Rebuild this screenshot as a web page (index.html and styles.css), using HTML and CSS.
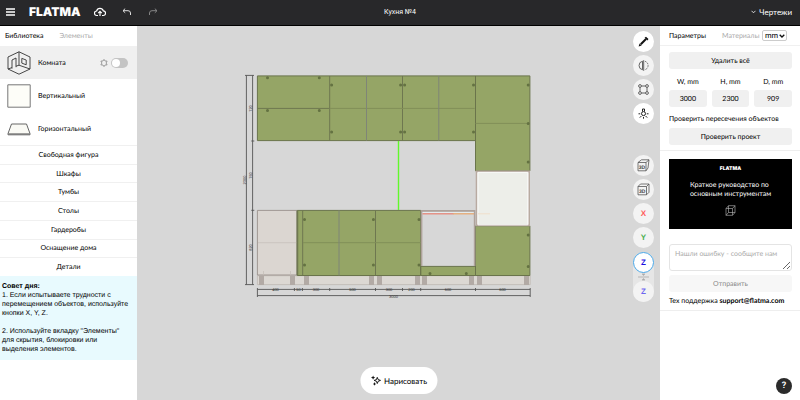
FILE: index.html
```
<!DOCTYPE html>
<html lang="ru">
<head>
<meta charset="utf-8">
<title>Flatma</title>
<link rel="stylesheet" href="styles.css">
</head>
<body>
<header class="bar">
  <button class="icon-btn menu" aria-label="Меню"><svg width="9" height="8" viewBox="0 0 9 8"><path d="M0 1h9M0 4h9M0 7h9" stroke="#fff" stroke-width="1.3"/></svg></button>
  <a class="logo" href="#">FLATMA</a>
  <button class="icon-btn cloud" aria-label="Сохранить"><svg width="12" height="10" viewBox="0 0 12 10" fill="none" stroke="#fff" stroke-width="1.2"><path d="M4 8.5H2.8A2.2 2.2 0 0 1 2.6 4 3.5 3.5 0 0 1 9.3 3.9 2.3 2.3 0 0 1 9.2 8.5H8M6 9V4.6M4.2 6.2 6 4.4l1.8 1.8"/></svg></button>
  <button class="icon-btn undo" aria-label="Отменить"><svg width="10" height="8" viewBox="0 0 10 8" fill="none" stroke="#ddd"><path d="M3.2.6 1 2.7l2.2 2.1M1 2.7h5q2.5 0 2.5 2.3V7"/></svg></button>
  <button class="icon-btn" aria-label="Повторить"><svg width="10" height="8" viewBox="0 0 10 8" fill="none" stroke="#858585"><path d="M6.8.6 9 2.7 6.8 4.8M9 2.7H4Q1.5 2.7 1.5 5v2"/></svg></button>
  <h1 class="title">Кухня №4</h1>
  <button class="icon-btn drawings"><svg width="5" height="4" viewBox="0 0 5 4" fill="none" stroke="#fff" stroke-width=".8"><path d="m.5.8 2 2 2-2"/></svg>Чертежи</button>
</header>
<main class="workspace">
  <aside class="library">
    <nav class="tabs"><a href="#">Библиотека</a><a class="muted" href="#">Элементы</a></nav>
    <div class="item selected">
      <svg width="24" height="24" viewBox="0 0 24 24" fill="none" stroke="#333" stroke-width=".9"><path d="M12 .8 23 6v12l-11 5.2L1 18V6zM12 .8v13.4M1 18l4-1.4M9 15.2l3-1L23 18M5 17.6V9l4-2v9.2M14.8 7.4l4.4 1.6v4.8l-4.4-1.7z"/></svg>
      <label class="name" for="room">Комната</label>
      <svg class="gear" width="8" height="8" viewBox="0 0 8 8" fill="none" stroke="#888" stroke-width=".8"><path d="M4 .4 5 2l2.1.1L6.1 4l1 1.9L5 6 4 7.6 3 6 .9 5.9l1-1.9-1-1.9L3 2z"/></svg>
      <input class="switch" id="room" type="checkbox">
    </div>
    <div class="item">
      <svg width="24" height="24" viewBox="0 0 24 24"><path d="M.8.8h22.4v22.4H.8z" fill="#fdfdf8" stroke="#777"/></svg>
      <span class="name">Вертикальный</span>
    </div>
    <div class="item">
      <svg width="24" height="24" viewBox="0 0 24 24"><path d="M4.5 7h15L23 16.6v1.2H1v-1.2z" fill="#fafaf5" stroke="#666"/><path d="M1 17h22" stroke="#777" stroke-width="1.4"/></svg>
      <span class="name">Горизонтальный</span>
    </div>
    <nav class="groups">
      <a href="#">Свободная фигура</a><a href="#">Шкафы</a><a href="#">Тумбы</a><a href="#">Столы</a><a href="#">Гардеробы</a><a href="#">Оснащение дома</a><a href="#">Детали</a>
    </nav>
    <section class="tip">
      <h2>Совет дня:</h2>
      <p>1. Если испытываете трудности с перемещением объектов, используйте кнопки X, Y, Z.</p>
      <p>2. Используйте вкладку "Элементы" для скрытия, блокировки или выделения элементов.</p>
    </section>
  </aside>

  <section class="stage">
    <svg class="plan" width="321" height="230" viewBox="238 70 321 230">
      <g fill="none" stroke="#555" stroke-width=".9">
        <path d="M246.4 75.4V284.6M252.6 75.4V284.6M245 75.4h9M251.3 141h3M251.3 210.3h3M245 284.6h9"/>
        <path d="M257.4 289.4H530.2M257.4 295.6H530.2M257.4 288v9M530.2 288v9M294.4 288v3M302.4 288v3M329.7 288v3M375.5 288v3M402.5 288v3M420.7 288v3M475.5 288v3"/>
      </g>
      <g class="dims">
        <text x="275.5" y="291">400</text><text x="298.4" y="291">50</text><text x="316" y="291">300</text><text x="352.5" y="291">500</text><text x="389" y="291">300</text><text x="411.5" y="291">200</text><text x="448" y="291">600</text><text x="502.5" y="291">600</text><text x="393.5" y="297.5">3000</text>
        <text transform="translate(252 108.5) rotate(-90)">720</text><text transform="translate(252 175.5) rotate(-90)">760</text><text transform="translate(252 247.5) rotate(-90)">820</text><text transform="translate(246 180) rotate(-90)">2300</text>
      </g>
      <path d="M257.4 275.7H530.2V284.6H257.4z" fill="#dcd8d3" stroke="#bbb4ae" stroke-width=".7"/>
      <path d="M259 276h5v9h-5zM290 276h5v9h-5zM304 276h5v9h-5zM369 276h5v9h-5zM377 276h5v9h-5zM415 276h5v9h-5zM422 276h5v9h-5zM469 276h5v9h-5zM477 276h5v9h-5zM524 276h5v9h-5z" fill="#b2aaa5"/>
      <path d="M257.4 210.4H297v64.6h-39.6z" fill="#dbd6d1" stroke="#99908b" stroke-width=".9"/>
      <path d="M258 242.7h39M263.5 271v4M290.5 271v4" stroke="#c4bdb7" stroke-width=".7"/>
      <g fill="#95a566" stroke="#6a744b">
        <path d="M257.4 75.9H475.5V140.6H257.4zM475.5 75.9h54.4v95h-54.4zM475.5 225.9h54.4v49.6h-54.4zM297.2 210.4h123.5v65.1H297.2zM420.7 266.4h54.8v9.1h-54.8z"/>
      </g>
      <g fill="none" stroke="#6e7750">
        <path d="M257.4 108.4h72.3M329.7 76v64.6M402.5 76v64.6M302.7 210.4v65M375.5 210.4v65"/>
        <path d="M329.7 108.4h145M475.5 123.4h54M303 242.7h117.7" stroke="#818f58"/>
        <path d="M366.5 76v64.6M438.8 76v64.6M339 210.4v65" stroke="#7f8577"/>
        <path d="M297.5 211v64" stroke-width="1.5"/>
      </g>
      <path d="M476.5 171.4h52.7v54h-52.7z" fill="#edeee9" stroke="#b8aaa1" stroke-width="1.6"/>
      <path d="M478 172.4h49.8v52.4H478z" fill="none" stroke="#fafafa"/>
      <path d="M421.6 266V210.9h53V266" fill="none" stroke="#aea29b" stroke-width="1.6"/>
      <path d="M422.6 212.7h51" stroke="#e4f1f4"/>
      <path d="M422.5 213.8h31" stroke="#e68172" stroke-width="1.2"/><path d="M453 213.8h21" stroke="#e8a56b" stroke-width="1.2"/><path d="M478 213.8h12" stroke="#f0dfca"/>
      <path d="M398.5 141v69" stroke="#62f82b" stroke-width="1.4"/>
      <path class="hinges" d="M267.5 77.8h.01M319.3 77.8h.01M267.5 110.6h.01M319.3 110.6h.01M331.6 85h.01M331.6 132h.01M400.6 85h.01M400.6 132h.01M404.6 85h.01M404.6 132h.01M473.5 85h.01M473.5 132h.01M528.2 85h.01M528.2 123.4h.01M528.2 162h.01M304.5 219.4h.01M304.5 265h.01M373.4 219.4h.01M373.4 265h.01M419 219.4h.01M419 265h.01M430 273.6h.01M466.3 273.6h.01M528.2 235h.01M528.2 266.4h.01"/>
    </svg>

    <div class="tools">
      <button class="tool solid" aria-label="Крепёж"><svg width="11" height="11" viewBox="0 0 11 11"><path d="M2.8 8.2 8 3" stroke="#111" stroke-width="2"/><path d="m6.6 1.8 1.4-1.1 2.5 2.4-1.2 1.5zM.6 10.4l1-3L3.7 9.4z" fill="#111"/></svg></button>
      <button class="tool" aria-label="Отразить"><svg width="11" height="11" viewBox="0 0 11 11" fill="none" stroke="#555" stroke-width=".9"><path d="M4.5 1.2a4.4 4.4 0 0 0 0 8.6zM5.7.2v10.6"/><path d="M7 1.3a4.4 4.4 0 0 1 0 8.4" stroke-dasharray="1.6 1"/></svg></button>
      <button class="tool" aria-label="Группа"><svg width="11" height="11" viewBox="0 0 11 11" fill="none" stroke="#555" stroke-width=".9"><circle cx="2" cy="2" r="1.4"/><circle cx="9" cy="2" r="1.4"/><circle cx="2" cy="9" r="1.4"/><circle cx="9" cy="9" r="1.4"/><path d="M3.3 2h4.4M3.3 9h4.4M2 3.3v4.4M9 3.3v4.4"/></svg></button>
      <button class="tool solid" aria-label="Свет"><svg width="11" height="11" viewBox="0 0 11 11" fill="none" stroke="#222"><circle cx="5.5" cy="5.6" r="2"/><path d="M4.5 3.5V1h2v2.5M.5 5.8h1.7M8.8 5.8h1.7M1.8 9.6l1.6-1.6M9.2 9.6 7.6 8M5.5 9v1.7"/></svg></button>
      <button class="tool second" aria-label="Перспектива 3D"><svg width="13" height="13" viewBox="0 0 13 13"><path d="M1 3.5h8v8.3H1zM1 3.5 4.5.8H12L9 3.5M12 .8 11 9l-2 2.8" fill="none" stroke="#555" stroke-width=".8"/><text class="cube" x="5" y="9.5">3D</text></svg></button>
      <button class="tool" aria-label="Изометрия 3D"><svg width="13" height="13" viewBox="0 0 13 13"><path d="M1 3.5h8.5v8.3H1zM1 3.5 3.5 1H12L9.5 3.5M12 1v8.3l-2.5 2.5" fill="none" stroke="#555" stroke-width=".8"/><text class="cube" x="5.2" y="9.5">3D</text></svg></button>
      <button class="tool axis-x">X</button>
      <button class="tool axis-y">Y</button>
      <div class="depth">
        <button class="tool axis-z">Z</button>
        <svg width="11" height="8" viewBox="0 0 11 8"><path d="M0 4h11M4 1h3M4 7h3" stroke="#aaa" stroke-width=".8"/><path d="m4 1 1.5 2L7 1M4 7l1.5-2L7 7" fill="#aaa"/></svg>
        <button class="tool axis-back">Z</button>
      </div>
    </div>
    <button class="draw"><svg width="11" height="11" viewBox="0 0 11 11"><path d="M6.8 2.4 7.7 4.6 10 5.4 7.7 6.3 6.8 8.5 6 6.3 3.7 5.4 6 4.6z" fill="none" stroke="#111"/><path d="m2.6.4.7 1.5 1.5.6-1.5.7-.7 1.5-.6-1.5-1.5-.7L2 1.9zM4 7.1l.6 1.3 1.3.5-1.3.6L4 10.8l-.5-1.3-1.3-.6 1.3-.5z" fill="#111"/></svg>Нарисовать</button>
  </section>

  <aside class="props">
    <nav class="tabs"><a href="#">Параметры</a><a class="muted" href="#">Материалы</a>
      <div class="units"><select aria-label="Единицы"><option>mm</option></select><svg width="6" height="4" viewBox="0 0 6 4" fill="none" stroke="#111" stroke-width="1.3"><path d="m.7.7 2.3 2.3L5.3.7"/></svg></div></nav>
    <div class="block form">
      <button class="wide">Удалить всё</button>
      <div class="sizes">
        <label>W, mm<input value="3000"></label>
        <label>H, mm<input value="2300"></label>
        <label>D, mm<input value="909"></label>
      </div>
      <p class="check">Проверить пересечения объектов</p>
      <button class="wide">Проверить проект</button>
    </div>
    <div class="block help">
      <a class="guide" href="#">
        <span class="guide-logo">FLATMA</span>
        <span class="guide-text">Краткое руководство по<br>основным инструментам</span>
        <svg width="11" height="11" viewBox="0 0 11 11" fill="none" stroke="#bbb" stroke-width=".6"><path d="M1 3.5h6.5v6.8H1zM3.5.7H10v6.8H3.5zM1 3.5 3.5.7M7.5 3.5 10 .7M7.5 10.3 10 7.5M1 10.3l2.5-2.8"/></svg>
      </a>
      <textarea aria-label="Сообщение об ошибке" placeholder="Нашли ошибку - сообщите нам"></textarea>
      <button class="wide send" disabled>Отправить</button>
      <p class="support">Тех поддержка <a href="mailto:support@flatma.com">support@flatma.com</a></p>
    </div>
  </aside>
</main>
<button class="question" aria-label="Помощь">?</button>
</body>
</html>
```
FILE: styles.css
```
* { box-sizing: border-box; }
body {
  margin: 0;
  min-height: 100vh;
  display: flex;
  flex-direction: column;
  font: 7px/10px Lato, sans-serif;
  color: #000;
  text-rendering: geometricPrecision;
}
h1, h2, p { margin: 0; font-size: inherit; font-weight: inherit; }
a { color: inherit; text-decoration: none; }
button, input, select, textarea { font: inherit; color: inherit; margin: 0; padding: 0; border: 0; text-rendering: inherit; }
svg { display: block; flex: none; }

.bar {
  position: relative;
  display: flex;
  align-items: center;
  height: 26px;
  padding: 0 8px 2px 6px;
  background: #28282a;
  border-bottom: 1px solid #000;
  color: #fff;
}
.icon-btn { background: none; }
.logo { margin: 0 14px; font: 900 12px/12px Inter, sans-serif; }
.cloud { margin-right: 16px; }
.undo { margin-right: 16px; }
.title { position: absolute; left: 0; right: 0; text-align: center; pointer-events: none; font-family: Roboto, sans-serif; }
.drawings { display: flex; align-items: center; gap: 3px; margin-left: auto; font-size: 8px; }

.workspace { flex: 1; display: grid; grid-template-columns: 137px 1fr 140px; }
.tabs { display: flex; align-items: center; height: 20px; }
.muted { margin-left: 16px; color: #aaa; }

.library { background: #fff; }
.library .tabs { padding-left: 5px; }
.item { display: flex; align-items: center; height: 33px; padding: 0 9px 0 7px; }
.selected { background: #f0f0f0; }
.name { margin-left: 7px; }
.gear { margin-left: auto; }
.switch {
  appearance: none;
  display: flex;
  width: 17px;
  height: 10px;
  margin-left: 3px;
  border-radius: 5px;
  background: #c4c4c4;
}
.switch::before { content: ""; width: 8px; height: 8px; margin: 1px; border-radius: 50%; background: #fff; }
.switch:checked::before { margin-left: auto; }
.groups { display: grid; grid-auto-rows: 1fr; height: 131px; }
.groups a { display: flex; align-items: center; justify-content: center; border-top: 1px solid #f0f0f0; }
.tip { padding: 6px 6px 6px 2px; background: #e8fafe; font: 7px/9px "Liberation Sans", sans-serif; }
.tip h2 { font-weight: bold; color: #000; }
.tip p + p { margin-top: 9px; }

.stage { position: relative; background: #d7d7d7; padding-top: 44px; }
.plan { margin: 0 auto; }
.dims { font: 4px "Liberation Sans", sans-serif; fill: #333; text-anchor: middle; }
.hinges { stroke: #647242; stroke-width: 3px; stroke-linecap: round; }

.tools { position: absolute; top: 5px; right: 6px; display: grid; gap: 3px; }
.tool {
  display: grid;
  place-items: center;
  width: 21px;
  height: 21px;
  border-radius: 50%;
  background: #f3f3f3;
  font: bold 8px/8px "Liberation Sans", sans-serif;
}
.solid { background: #fff; }
.second { margin-top: 28px; }
.cube { font: bold 5px "Liberation Sans", sans-serif; fill: #444; text-anchor: middle; }
.axis-x { color: #ff5a5a; }
.axis-y { color: #4caf50; }
.axis-z { background: #fff; border: 1px solid #4aa8e8; color: #1a10e0; }
.axis-back { color: #6d66f0; }
.depth { display: grid; justify-items: center; margin-top: 1px; border-radius: 11px; background: #e6e6e6; }
.draw {
  position: absolute;
  left: 50%;
  bottom: 6px;
  transform: translateX(-50%);
  display: flex;
  align-items: center;
  gap: 3px;
  height: 27px;
  padding: 0 10px;
  border-radius: 14px;
  background: #fff;
  font-size: 8px;
}

.props { background: #fff; }
.props .tabs { padding: 0 13px 0 9px; border-bottom: 1px solid #f0f0f0; }
.units { display: grid; align-items: center; margin-left: auto; }
.units > * { grid-area: 1 / 1; }
.units svg { justify-self: end; margin-right: 2px; pointer-events: none; }
.units select {
  appearance: none;
  height: 11px;
  width: 25px;
  padding-left: 2px;
  border: 1px solid #ccc;
  border-radius: 2px;
  background: #fff;
  color: #000;
  font-size: 8px;
  line-height: 9px;
}
.block { padding: 6px 8px 5px 9px; border-bottom: 1px solid #eee; }
.wide { display: block; width: 100%; height: 17px; border-radius: 3px; background: #f0f0f0; }
.sizes { display: grid; grid-template-columns: repeat(3, 1fr); gap: 5px; margin: 8px 0 7px; }
.sizes label { display: grid; gap: 3px; text-align: center; }
.sizes input { width: 100%; height: 17px; border-radius: 3px; background: #f0f0f0; text-align: center; }
.check { margin-bottom: 4px; }
.help { padding-top: 8px; padding-bottom: 4px; }
.guide {
  display: flex;
  flex-direction: column;
  align-items: center;
  height: 70px;
  padding-top: 7px;
  background: #000;
  color: #fff;
}
.guide-logo { font: 900 5px/6px Inter, sans-serif; }
.guide-text { margin: 9px 0 6px; line-height: 9px; white-space: nowrap; }
textarea {
  display: block;
  width: 100%;
  height: 27px;
  margin: 15px 0 4px;
  padding: 4px 5px;
  border: 1px solid #e4e4e4;
  border-radius: 3px;
}
textarea::placeholder { color: #aaa; }
.send { background: #f7f7f7; color: #888; }
.support { margin-top: 4px; }
.support a { font-weight: bold; color: #000; }
.question {
  position: fixed;
  right: 8px;
  bottom: 6px;
  width: 16px;
  height: 16px;
  border-radius: 50%;
  background: #2b2b2b;
  color: #fff;
  font: bold 9px/16px Roboto, sans-serif;
}
```
